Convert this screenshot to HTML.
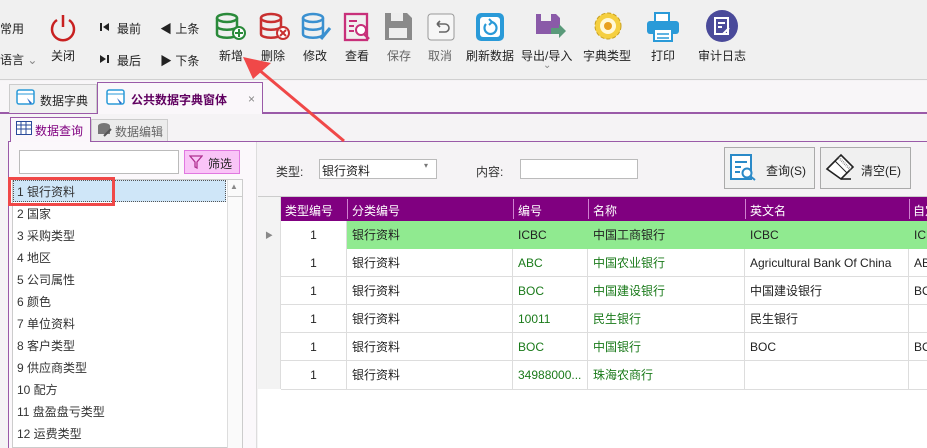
<!DOCTYPE html><html><head><meta charset="utf-8"><style>
*{margin:0;padding:0;box-sizing:border-box}
body{width:927px;height:448px;overflow:hidden;background:#f5f3f5;font-family:"Liberation Sans","Noto Sans CJK SC",sans-serif;font-size:12px;color:#222;position:relative}
.a{position:absolute}
.tb{left:0;top:0;width:927px;height:80px;background:#f0f0f0;border-bottom:1px solid #d0d0d0}
.lbl{position:absolute;font-size:12px;color:#222;white-space:nowrap}
.ic{position:absolute}
.row{position:absolute;left:281px;height:28px;width:646px;border-bottom:1px solid #ddd;background:#fff}
.c{position:absolute;top:0;height:28px;line-height:28px;padding-left:5px;border-right:1px solid #ddd;white-space:nowrap;overflow:hidden}
.g{color:#1a7a1a}
.li{position:absolute;left:17px;font-size:12px;color:#333}
</style></head><body>
<div class="a tb"></div>
<div class="lbl" style="left:0;top:20px">常用</div>
<div class="lbl" style="left:0;top:51px">语言 <span style="color:#888">⌄</span></div>
<svg class="ic" style="left:48px;top:12px" width="30" height="30"><path d="M9 8A11 11 0 1 0 21 8" fill="none" stroke="#c82020" stroke-width="2.5"/><line x1="15" y1="3" x2="15" y2="15" stroke="#c82020" stroke-width="2.5"/></svg>
<div class="lbl" style="left:51px;top:47px">关闭</div>
<svg class="ic" style="left:100px;top:22px" width="10" height="10"><rect x="0" y="1" width="2" height="8" fill="#222"/><path d="M9 1v8L3 5z" fill="#222"/></svg>
<div class="lbl" style="left:117px;top:20px">最前</div>
<svg class="ic" style="left:100px;top:54px" width="10" height="10"><rect x="7" y="1" width="2" height="8" fill="#222"/><path d="M0 1v8l6-4z" fill="#222"/></svg>
<div class="lbl" style="left:117px;top:52px">最后</div>
<div class="lbl" style="left:160px;top:20px">◀ 上条</div>
<div class="lbl" style="left:160px;top:52px">▶ 下条</div>
<svg class="ic" style="left:215px;top:12px" width="32" height="30"><ellipse cx="12" cy="6" rx="10" ry="4" fill="none" stroke="#2a8a3a" stroke-width="2.5"/><path d="M2 6v16c0 5 20 5 20 0V6M2 14c0 5 20 5 20 0" fill="none" stroke="#2a8a3a" stroke-width="2.5"/><circle cx="24" cy="21" r="6" fill="#fff" stroke="#2a8a3a" stroke-width="2"/><path d="M24 17v8M20 21h8" stroke="#2a8a3a" stroke-width="2"/></svg>
<div class="lbl" style="left:219px;top:47px">新增</div>
<svg class="ic" style="left:259px;top:12px" width="32" height="30"><ellipse cx="12" cy="6" rx="10" ry="4" fill="none" stroke="#c83030" stroke-width="2.5"/><path d="M2 6v16c0 5 20 5 20 0V6M2 14c0 5 20 5 20 0" fill="none" stroke="#c83030" stroke-width="2.5"/><circle cx="24" cy="21" r="6" fill="#fff" stroke="#c83030" stroke-width="2"/><path d="M21 18l6 6M27 18l-6 6" stroke="#c83030" stroke-width="2"/></svg>
<div class="lbl" style="left:261px;top:47px">删除</div>
<svg class="ic" style="left:301px;top:12px" width="32" height="30"><ellipse cx="12" cy="6" rx="10" ry="4" fill="none" stroke="#3a90d0" stroke-width="2.5"/><path d="M2 6v16c0 5 20 5 20 0V6M2 14c0 5 20 5 20 0" fill="none" stroke="#3a90d0" stroke-width="2.5"/><path d="M20 27l9-11" stroke="#3a90d0" stroke-width="3"/></svg>
<div class="lbl" style="left:303px;top:47px">修改</div>
<svg class="ic" style="left:343px;top:12px" width="30" height="30"><rect x="2" y="2" width="22" height="26" fill="none" stroke="#c8307a" stroke-width="2.3"/><path d="M6 9h8M6 14h5M6 19h5" stroke="#c8307a" stroke-width="2"/><circle cx="18" cy="18" r="5" fill="#fff" stroke="#c8307a" stroke-width="2"/><path d="M21 22l5 5" stroke="#c8307a" stroke-width="2.5"/></svg>
<div class="lbl" style="left:345px;top:47px">查看</div>
<svg class="ic" style="left:384px;top:12px" width="30" height="30"><path d="M1 1h22l5 5v22H1z" fill="#8a8a8a"/><rect x="7" y="1" width="12" height="8" fill="#eee"/><rect x="5" y="16" width="18" height="10" fill="#eee"/></svg>
<div class="lbl" style="left:387px;top:47px;color:#666">保存</div>
<svg class="ic" style="left:427px;top:13px" width="28" height="28"><rect x="1" y="1" width="26" height="26" rx="3" fill="#f6f6f6" stroke="#999"/><path d="M10 11h8a4 4 0 0 1 0 8h-6M10 11l3-3M10 11l3 3" fill="none" stroke="#666" stroke-width="1.6"/></svg>
<div class="lbl" style="left:428px;top:47px;color:#666">取消</div>
<svg class="ic" style="left:475px;top:12px" width="30" height="30"><rect x="1" y="1" width="28" height="28" rx="5" fill="#2a9ad8"/><rect x="5" y="5" width="20" height="20" rx="3" fill="#fff"/><path d="M11 12A6 6 0 1 0 16 10" fill="none" stroke="#2a9ad8" stroke-width="2.2"/><path d="M14 7l3 3-3 3" fill="none" stroke="#2a9ad8" stroke-width="2"/></svg>
<div class="lbl" style="left:466px;top:47px">刷新数据</div>
<svg class="ic" style="left:535px;top:13px" width="32" height="30"><path d="M1 1h20l4 4v16H1z" fill="#8a5aa8"/><rect x="6" y="1" width="10" height="7" fill="#f0f0f0"/><path d="M16 15h8v-4l7 7-7 7v-4h-8z" fill="#5a9a7a"/></svg>
<div class="lbl" style="left:521px;top:47px">导出/导入</div>
<div class="lbl" style="left:543px;top:60px;color:#888;font-size:10px">⌄</div>
<svg class="ic" style="left:593px;top:11px" width="30" height="30"><circle cx="15" cy="15" r="13" fill="#f5cf40" stroke="#c8a020" stroke-dasharray="4 2"/><circle cx="15" cy="15" r="8" fill="#fff8d8"/><circle cx="15" cy="15" r="4" fill="#e8a020"/></svg>
<div class="lbl" style="left:583px;top:47px">字典类型</div>
<svg class="ic" style="left:646px;top:12px" width="34" height="30"><rect x="9" y="1" width="14" height="9" fill="#fff" stroke="#2a9ad8" stroke-width="2"/><rect x="1" y="9" width="32" height="13" rx="3" fill="#2a9ad8"/><rect x="8" y="17" width="18" height="12" fill="#fff" stroke="#2a9ad8" stroke-width="2"/><path d="M11 22h12M11 26h12" stroke="#2a9ad8" stroke-width="1.5"/></svg>
<div class="lbl" style="left:651px;top:47px">打印</div>
<svg class="ic" style="left:706px;top:10px" width="32" height="32"><circle cx="16" cy="16" r="16" fill="#4a4a9a"/><rect x="9" y="8" width="13" height="16" fill="none" stroke="#fff" stroke-width="2"/><path d="M12 13h7M12 17h4M17 24l6-6" stroke="#fff" stroke-width="2"/></svg>
<div class="lbl" style="left:698px;top:47px">审计日志</div>
<!-- tab strip -->
<div class="a" style="left:0;top:81px;width:927px;height:32px;background:#f8f6f8"></div>
<div class="a" style="left:0;top:112px;width:927px;height:2px;background:#9a5aa8"></div>
<div class="a" style="left:9px;top:84px;width:88px;height:29px;border:1px solid #ccc;border-bottom:none;background:#f0f0f0"></div>
<svg class="a" style="left:16px;top:89px" width="20" height="18"><rect x="1" y="1" width="17" height="14" rx="2" fill="#fff" stroke="#2a9ad8" stroke-width="1.5"/><path d="M1 5h17" stroke="#2a9ad8"/><path d="M11 9l5 5-2 1z" fill="#2a6ac8"/></svg>
<div class="lbl" style="left:40px;top:92px">数据字典</div>
<div class="a" style="left:97px;top:82px;width:166px;height:32px;border:1px solid #9a5aa8;border-bottom:none;background:#faf7fa"></div>
<svg class="a" style="left:106px;top:89px" width="20" height="18"><rect x="1" y="1" width="17" height="14" rx="2" fill="#fff" stroke="#2a9ad8" stroke-width="1.5"/><path d="M1 5h17" stroke="#2a9ad8"/><path d="M11 9l5 5-2 1z" fill="#2a6ac8"/></svg>
<div class="lbl" style="left:131px;top:91px;font-weight:bold;color:#600060">公共数据字典窗体</div>
<div class="lbl" style="left:248px;top:92px;color:#888">×</div>
<!-- inner tabs -->
<div class="a" style="left:8px;top:141px;width:919px;height:1px;background:#9a5aa8"></div>
<div class="a" style="left:10px;top:117px;width:81px;height:25px;border:1px solid #9a5aa8;border-bottom:none;background:#fbf7fb"></div>
<svg class="a" style="left:16px;top:121px" width="16" height="14"><rect x="0.5" y="0.5" width="15" height="13" fill="#fff" stroke="#2a4a9a"/><path d="M0 4h16M0 8h16M5 0v14M10 0v14" stroke="#2a4a9a"/></svg>
<div class="lbl" style="left:35px;top:122px;color:#800080">数据查询</div>
<div class="a" style="left:91px;top:119px;width:77px;height:22px;border:1px solid #ccc;border-bottom:none;background:#ececec"></div>
<svg class="a" style="left:97px;top:122px" width="16" height="16"><ellipse cx="7" cy="4" rx="6" ry="3" fill="#777"/><rect x="1" y="4" width="12" height="8" fill="#777"/><path d="M7 14l7-7" stroke="#555" stroke-width="2"/></svg>
<div class="lbl" style="left:115px;top:123px;color:#666">数据编辑</div>
<!-- left panel -->
<div class="a" style="left:8px;top:142px;width:1px;height:306px;background:#9a5aa8"></div>
<div class="a" style="left:9px;top:142px;width:248px;height:306px;background:#fbf8fb;border-right:1px solid #ddd"></div>
<div class="a" style="left:19px;top:150px;width:160px;height:24px;background:#fff;border:1px solid #bbb"></div>
<div class="a" style="left:184px;top:150px;width:56px;height:24px;background:#f9c4f7;border:1px solid #e078e0"></div>
<svg class="a" style="left:189px;top:155px" width="14" height="14"><path d="M1 1h12l-5 6v6l-2-1V7z" fill="none" stroke="#b03090" stroke-width="1.3"/></svg>
<div class="lbl" style="left:208px;top:155px">筛选</div>
<div class="a" style="left:12px;top:179px;width:231px;height:269px;background:#fff;border:1px solid #ccc"></div>
<div class="a" style="left:227px;top:180px;width:15px;height:268px;background:#fafafa;border-left:1px solid #ddd"></div>
<div class="lbl" style="left:230px;top:182px;font-size:8px;color:#888">▲</div>
<div class="a" style="left:228px;top:196px;width:14px;height:1px;background:#ccc"></div>
<div class="a" style="left:13px;top:180px;width:213px;height:22px;background:#cfe6f8;border:1px dotted #555"></div>
<div class="a" style="left:8px;top:177px;width:107px;height:29px;border:3px solid #f04848"></div>
<div class="li" style="top:183px">1 银行资料</div>
<div class="li" style="top:205px">2 国家</div>
<div class="li" style="top:227px">3 采购类型</div>
<div class="li" style="top:249px">4 地区</div>
<div class="li" style="top:271px">5 公司属性</div>
<div class="li" style="top:293px">6 颜色</div>
<div class="li" style="top:315px">7 单位资料</div>
<div class="li" style="top:337px">8 客户类型</div>
<div class="li" style="top:359px">9 供应商类型</div>
<div class="li" style="top:381px">10 配方</div>
<div class="li" style="top:403px">11 盘盈盘亏类型</div>
<div class="li" style="top:425px">12 运费类型</div>
<!-- right -->
<div class="lbl" style="left:276px;top:163px;color:#333">类型:</div>
<div class="a" style="left:319px;top:159px;width:118px;height:20px;background:#fff;border:1px solid #bbb"></div>
<div class="lbl" style="left:322px;top:162px">银行资料</div>
<div class="lbl" style="left:424px;top:161px;font-size:8px;color:#777">▾</div>
<div class="lbl" style="left:476px;top:163px;color:#333">内容:</div>
<div class="a" style="left:520px;top:159px;width:118px;height:20px;background:#fff;border:1px solid #bbb"></div>
<div class="a" style="left:724px;top:147px;width:91px;height:42px;background:#f0f0f0;border:1px solid #aaa"></div>
<svg class="a" style="left:729px;top:153px" width="30" height="30"><rect x="2" y="2" width="20" height="24" fill="#fff" stroke="#2a8ac8" stroke-width="2"/><path d="M6 9h12M6 14h6M6 19h5" stroke="#2a8ac8" stroke-width="2"/><circle cx="18" cy="20" r="4.5" fill="#fff" stroke="#2a8ac8" stroke-width="2"/><path d="M21 23l5 4" stroke="#2a8ac8" stroke-width="2"/></svg>
<div class="lbl" style="left:766px;top:162px">查询(S)</div>
<div class="a" style="left:820px;top:147px;width:91px;height:42px;background:#f0f0f0;border:1px solid #aaa"></div>
<svg class="a" style="left:825px;top:153px" width="30" height="30"><path d="M2 16L16 2l12 12-12 12z" fill="#fff" stroke="#222" stroke-width="1.6"/><path d="M10 8l12 12" stroke="#222"/><path d="M12 4l14 14M14 4l12 12" stroke="#888" stroke-dasharray="1 1"/><path d="M16 26h10" stroke="#222" stroke-width="1.6"/></svg>
<div class="lbl" style="left:861px;top:162px">清空(E)</div>
<!-- grid -->
<div class="a" style="left:258px;top:196px;width:669px;height:252px;background:#fff;border-top:1px solid #ccc"></div>
<div class="a" style="left:258px;top:197px;width:23px;height:192px;background:#f3f3f3;border-right:1px solid #ddd"></div>
<div class="a" style="left:281px;top:197px;width:646px;height:24px;background:#800080"></div>
<div class="lbl" style="left:285px;top:202px;color:#fff">类型编号</div>
<div class="a" style="left:347px;top:199px;width:1px;height:20px;background:#d080d0"></div>
<div class="lbl" style="left:352px;top:202px;color:#fff">分类编号</div>
<div class="a" style="left:513px;top:199px;width:1px;height:20px;background:#d080d0"></div>
<div class="lbl" style="left:518px;top:202px;color:#fff">编号</div>
<div class="a" style="left:588px;top:199px;width:1px;height:20px;background:#d080d0"></div>
<div class="lbl" style="left:593px;top:202px;color:#fff">名称</div>
<div class="a" style="left:745px;top:199px;width:1px;height:20px;background:#d080d0"></div>
<div class="lbl" style="left:750px;top:202px;color:#fff">英文名</div>
<div class="a" style="left:909px;top:199px;width:1px;height:20px;background:#d080d0"></div>
<div class="lbl" style="left:913px;top:202px;color:#fff">自定</div>
<div class="lbl" style="left:265px;top:230px;font-size:8px;color:#888">▶</div>

<div class="row" style="top:221px"><div class="c" style="left:0;width:66px;text-align:center;padding:0;background:#fff">1</div><div class="c" style="left:66px;width:580px;background:#90ea90;border:none;padding:0"></div><div class="c" style="left:66px;width:166px;border:none">银行资料</div><div class="c" style="left:232px;width:75px;border:none">ICBC</div><div class="c" style="left:307px;width:157px;border:none">中国工商银行</div><div class="c" style="left:464px;width:164px;border:none">ICBC</div><div class="c" style="left:628px;width:30px;border:none">ICBC</div></div>
<div class="row" style="top:249px"><div class="c" style="left:0;width:66px;text-align:center;padding:0">1</div><div class="c" style="left:66px;width:166px">银行资料</div><div class="c g" style="left:232px;width:75px">ABC</div><div class="c g" style="left:307px;width:157px">中国农业银行</div><div class="c" style="left:464px;width:164px">Agricultural Bank Of China</div><div class="c" style="left:628px;width:30px">ABC</div></div>
<div class="row" style="top:277px"><div class="c" style="left:0;width:66px;text-align:center;padding:0">1</div><div class="c" style="left:66px;width:166px">银行资料</div><div class="c g" style="left:232px;width:75px">BOC</div><div class="c g" style="left:307px;width:157px">中国建设银行</div><div class="c" style="left:464px;width:164px">中国建设银行</div><div class="c" style="left:628px;width:30px">BOC</div></div>
<div class="row" style="top:305px"><div class="c" style="left:0;width:66px;text-align:center;padding:0">1</div><div class="c" style="left:66px;width:166px">银行资料</div><div class="c g" style="left:232px;width:75px">10011</div><div class="c g" style="left:307px;width:157px">民生银行</div><div class="c" style="left:464px;width:164px">民生银行</div><div class="c" style="left:628px;width:30px"></div></div>
<div class="row" style="top:333px"><div class="c" style="left:0;width:66px;text-align:center;padding:0">1</div><div class="c" style="left:66px;width:166px">银行资料</div><div class="c g" style="left:232px;width:75px">BOC</div><div class="c g" style="left:307px;width:157px">中国银行</div><div class="c" style="left:464px;width:164px">BOC</div><div class="c" style="left:628px;width:30px">BOC</div></div>
<div class="row" style="top:361px;height:29px"><div class="c" style="left:0;width:66px;text-align:center;padding:0">1</div><div class="c" style="left:66px;width:166px">银行资料</div><div class="c g" style="left:232px;width:75px">34988000...</div><div class="c g" style="left:307px;width:157px">珠海农商行</div><div class="c" style="left:464px;width:164px"></div><div class="c" style="left:628px;width:30px"></div></div>
<!-- arrow on top -->
<svg class="a" style="left:240px;top:55px" width="110" height="90"><path d="M12 9L104 86" stroke="#f04848" stroke-width="3"/><path d="M3 2l28 6-18 16z" fill="#f04848"/></svg>
</body></html>
